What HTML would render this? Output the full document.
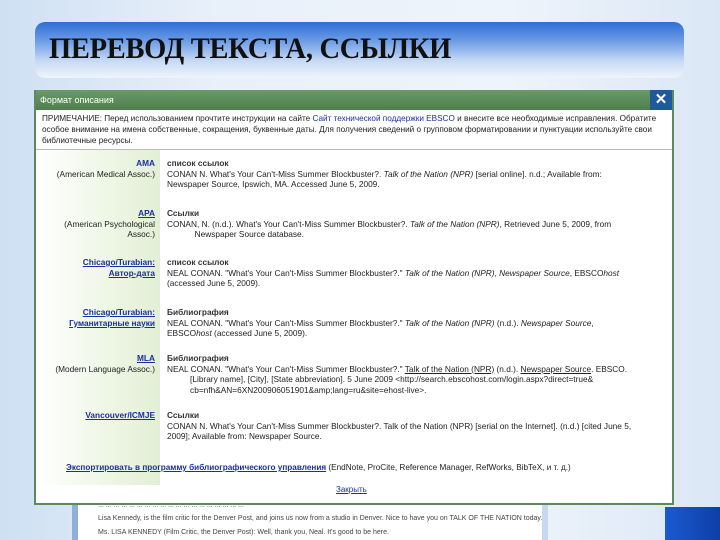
<!DOCTYPE html>
<html><head><meta charset="utf-8"><style>
*{margin:0;padding:0;box-sizing:border-box}
body{width:720px;height:540px;overflow:hidden;position:relative;background:linear-gradient(90deg,#cfe0f3 0%,#e8f0fa 30%,#eef4fb 70%,#dbe7f5 100%);font-family:"Liberation Sans",sans-serif}
.title{position:absolute;left:35px;top:22px;width:649px;height:56px;border-radius:10px;background:linear-gradient(180deg,#2f6ed6 0%,#6f9ee6 35%,#c8daf4 70%,#eef4fc 100%)}
.title h1{position:absolute;left:14px;top:10px;font-family:"Liberation Serif",serif;font-weight:bold;font-size:30px;color:#111;letter-spacing:-0.3px;transform:scaleX(0.95);transform-origin:left;white-space:nowrap}
.win{position:absolute;left:72px;top:500px;width:476px;height:40px;background:#fff;border-left:6px solid #8fb0d8;border-right:6px solid #c8d8ee}
.win div{font-size:7px;color:#444;position:absolute;left:20px;white-space:nowrap}
.tile{position:absolute;left:665px;top:507px;width:55px;height:33px;background:linear-gradient(90deg,#1a5bd0,#0d3ea8)}
.dlg{position:absolute;left:34px;top:90px;width:640px;height:415px;background:#fff;border:2px solid #5d8a5d;border-top:none}
.hdr{height:20px;background:linear-gradient(180deg,#6a9a66,#4f7f4d);color:#fff;font-size:9px;padding:5px 4px}
.x{position:absolute;right:0;top:0;width:22px;height:20px;background:#1f5a9e;color:#fff;font-weight:bold;font-size:15px;text-align:center;line-height:20px}
.note{font-size:8.2px;color:#222;line-height:11px;padding:3px 6px 0;height:40px;border-bottom:1px solid #bbb;overflow:hidden}
a{color:#1a2fa0}
.left{position:absolute;left:0;top:60px;width:124px;height:335px;background:linear-gradient(90deg,#fff 0%,#eef6e4 60%,#e2efd6 100%)}
.row{position:absolute;left:0;width:636px;font-size:8.3px;line-height:10.5px;color:#222}
.row .l{position:absolute;left:0;width:119px;text-align:right}
.row .r{position:absolute;left:131px;width:500px}
.row b{font-weight:bold;color:#333}
.l a{font-weight:bold}
.foot{position:absolute;left:30px;top:373px;font-size:8.2px;color:#222}
.close{position:absolute;left:300px;top:395px;font-size:8px}
</style></head><body>
<div class="title"><h1>ПЕРЕВОД ТЕКСТА, ССЫЛКИ</h1></div>
<div class="win">
<div style="top:2px">... ... ... ... ... ... ... ... ... ... ... ... ... ... ... ... ... ... ...</div>
<div style="top:15px">Lisa Kennedy, is the film critic for the Denver Post, and joins us now from a studio in Denver. Nice to have you on TALK OF THE NATION today.</div>
<div style="top:29px">Ms. LISA KENNEDY (Film Critic, the Denver Post): Well, thank you, Neal. It's good to be here.</div>
</div>
<div class="tile"></div>
<div class="dlg">
<div class="hdr">Формат описания</div><div class="x">✕</div>
<div class="note">ПРИМЕЧАНИЕ: Перед использованием прочтите инструкции на сайте <a>Сайт технической поддержки EBSCO</a> и внесите все необходимые исправления. Обратите особое внимание на имена собственные, сокращения, буквенные даты. Для получения сведений о групповом форматировании и пунктуации используйте свои библиотечные ресурсы.</div>
<div class="left"></div>
<div class="row" style="top:68px"><div class="l"><a>AMA</a><br>(American Medical Assoc.)</div><div class="r"><b>список ссылок</b><br>CONAN N. What's Your Can't-Miss Summer Blockbuster?. <i>Talk of the Nation (NPR)</i> [serial online]. n.d.; Available from:<br>Newspaper Source, Ipswich, MA. Accessed June 5, 2009.</div></div>
<div class="row" style="top:118px"><div class="l"><a><u>APA</u></a><br>(American Psychological<br>Assoc.)</div><div class="r"><b>Ссылки</b><br>CONAN, N. (n.d.). What's Your Can't-Miss Summer Blockbuster?. <i>Talk of the Nation (NPR)</i>, Retrieved June 5, 2009, from<br>&nbsp;&nbsp;&nbsp;&nbsp;&nbsp;&nbsp;&nbsp;&nbsp;&nbsp;&nbsp;&nbsp;&nbsp;Newspaper Source database.</div></div>
<div class="row" style="top:167px"><div class="l"><a><u>Chicago/Turabian:<br>Автор-дата</u></a></div><div class="r"><b>список ссылок</b><br>NEAL CONAN. "What's Your Can't-Miss Summer Blockbuster?." <i>Talk of the Nation (NPR)</i>, <i>Newspaper Source</i>, EBSCO<i>host</i><br>(accessed June 5, 2009).</div></div>
<div class="row" style="top:217px"><div class="l"><a><u>Chicago/Turabian:<br>Гуманитарные науки</u></a></div><div class="r"><b>Библиография</b><br>NEAL CONAN. "What's Your Can't-Miss Summer Blockbuster?." <i>Talk of the Nation (NPR)</i> (n.d.). <i>Newspaper Source</i>,<br>EBSCO<i>host</i> (accessed June 5, 2009).</div></div>
<div class="row" style="top:263px"><div class="l"><a><u>MLA</u></a><br>(Modern Language Assoc.)</div><div class="r"><b>Библиография</b><br>NEAL CONAN. "What's Your Can't-Miss Summer Blockbuster?." <u>Talk of the Nation (NPR)</u> (n.d.). <u>Newspaper Source</u>. EBSCO.<br>&nbsp;&nbsp;&nbsp;&nbsp;&nbsp;&nbsp;&nbsp;&nbsp;&nbsp;&nbsp;[Library name], [City], [State abbreviation]. 5 June 2009 &lt;http://search.ebscohost.com/login.aspx?direct=true&amp;<br>&nbsp;&nbsp;&nbsp;&nbsp;&nbsp;&nbsp;&nbsp;&nbsp;&nbsp;&nbsp;cb=nfh&amp;AN=6XN200906051901&amp;amp;lang=ru&amp;site=ehost-live&gt;.</div></div>
<div class="row" style="top:320px"><div class="l"><a><u>Vancouver/ICMJE</u></a></div><div class="r"><b>Ссылки</b><br>CONAN N. What's Your Can't-Miss Summer Blockbuster?. Talk of the Nation (NPR) [serial on the Internet]. (n.d.) [cited June 5,<br>2009]; Available from: Newspaper Source.</div></div>
<div class="foot"><a style="font-weight:bold"><u>Экспортировать в программу библиографического управления</u></a> (EndNote, ProCite, Reference Manager, RefWorks, BibTeX, и т. д.)</div>
<div class="close"><a><u>Закрыть</u></a></div>
</div>
</body></html>
